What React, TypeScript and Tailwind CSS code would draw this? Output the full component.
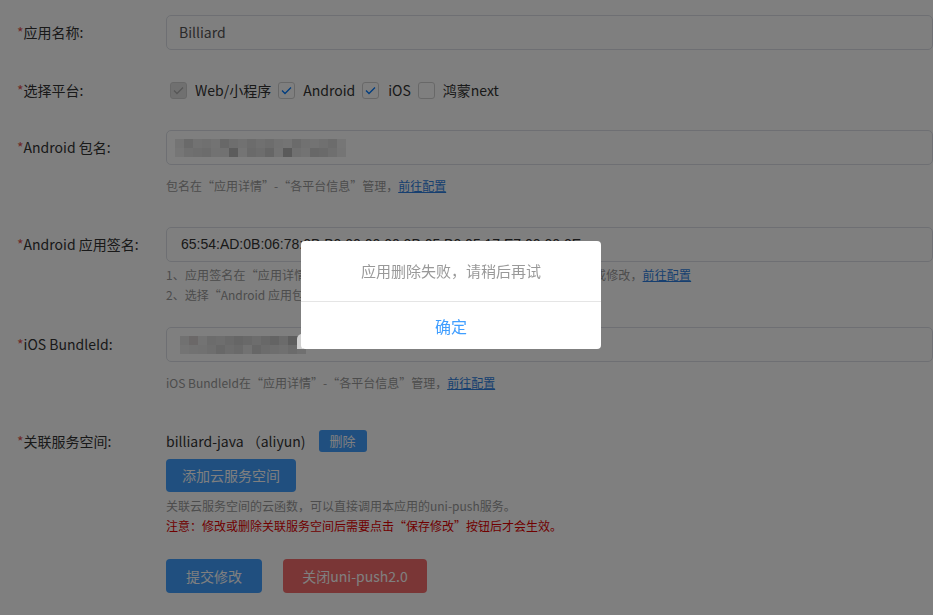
import React from "react";

const FONT = { fontFamily: "'Noto Sans CJK SC', 'Noto Sans', sans-serif" };

// blurred (mosaic) values, two rows of cells
const PKG_BLUR = [
  ["#e8e8e8", "#d4d4d4", "#e4e4e4", "#e0e0e0", "#e6e6e6", "#d0d0d0", "#dcdcdc", "#e2e2e2", "#d8d8d8", "#e0e0e0", "#dadada", "#e4e4e4", "#e8e8e8", "#d6d6d6", "#e2e2e2", "#e6e6e6", "#e0e0e0", "#d8d8d8", "#ececec"],
  ["#ececec", "#e0e0e0", "#dcdcdc", "#d8d8d8", "#e4e4e4", "#e2e2e2", "#b8b8b8", "#e8e8e8", "#d4d4d4", "#dadada", "#cccccc", "#e6e6e6", "#b4b4b4", "#e0e0e0", "#e6e6e6", "#d0d0d0", "#d4d4d4", "#dedede", "#eaeaea"],
];
const IOS_BLUR = [
  ["#e2e2e2", "#d6d0d0", "#e6e6e6", "#d8d8d8", "#dcdcdc", "#d4d4d4", "#cccccc", "#d2d2d2", "#dadada", "#d0d0d0", "#c8c8c8", "#d6d6d6", "#bcbcbc", "#c8c8c8"],
  ["#e8e8e8", "#e4e4e4", "#e2e2e2", "#dddddd", "#d0d0d0", "#dadada", "#d4d4d4", "#e4e4e4", "#cfcfcf", "#d8d8d8", "#dcdcdc", "#e0e0e0", "#d6d6d6", "#e0e0e0"],
];

function Mosaic({ rows, cell }: { rows: string[][]; cell: number }) {
  return (
    <div className="flex flex-col">
      {rows.map((r, i) => (
        <div key={i} className="flex">
          {r.map((c, j) => (
            <span key={j} style={{ background: c, width: cell, height: 9 }} />
          ))}
        </div>
      ))}
    </div>
  );
}

function Label({ children }: { children: React.ReactNode }) {
  return (
    <div className="w-[149px] shrink-0 text-[14px] text-[#333]">
      <span className="text-[#dd524d]">*</span>
      {children}
    </div>
  );
}

function Check({ on, disabled }: { on?: boolean; disabled?: boolean }) {
  return (
    <span
      className={`flex h-[17px] w-[17px] shrink-0 items-center justify-center rounded-[3px] border ${
        disabled ? "border-[#d1d1d1] bg-[#e1e1e1]" : "border-[#d1d1d1] bg-white"
      }`}
    >
      {on && (
        <svg width="11" height="9" viewBox="0 0 11 9" fill="none">
          <path
            d="M1 4.5 L4 7.5 L10 1.5"
            stroke={disabled ? "#adadad" : "#007aff"}
            strokeWidth="1.3"
          />
        </svg>
      )}
    </span>
  );
}

function Link() {
  return <span className="text-[#2e7fe0] underline">前往配置</span>;
}

export default function App() {
  return (
    <div className="relative h-screen w-full overflow-hidden bg-white" style={FONT}>
      <div className="pl-[17px] pt-[15px]">
        {/* 应用名称 */}
        <div className="flex items-center">
          <Label>应用名称:</Label>
          <div className="flex h-[35px] w-[820px] items-center rounded-[5px] border border-[#dcdfe6] px-[12px] text-[14px] text-[#555]">
            Billiard
          </div>
        </div>

        {/* 平台 */}
        <div className="mt-[23px] flex h-[35px] items-center">
          <Label>选择平台:</Label>
          <div className="flex items-center pl-[4px] text-[14px] text-[#333]">
            <Check on disabled />
            <span className="ml-[8px] mr-[7px]">Web/小程序</span>
            <Check on />
            <span className="ml-[8px] mr-[7px]">Android</span>
            <Check on />
            <span className="ml-[9px] mr-[7px]">iOS</span>
            <Check />
            <span className="ml-[8px]">鸿蒙next</span>
          </div>
        </div>

        {/* Android 包名 */}
        <div className="mt-[22px] flex items-center">
          <Label>Android 包名:</Label>
          <div className="flex h-[35px] w-[820px] items-center rounded-[5px] border border-[#dcdfe6] pl-[8px]">
            <Mosaic rows={PKG_BLUR} cell={9} />
          </div>
        </div>
        <div className="mt-[11px] pl-[149px] text-[12px] leading-[20px] text-[#999]">
          包名在“应用详情”-“各平台信息”管理，<Link />
        </div>

        {/* Android 应用签名 */}
        <div className="mt-[31px] flex items-center">
          <Label>Android 应用签名:</Label>
          <div
            className="flex h-[35px] w-[820px] items-center rounded-[5px] border border-[#dcdfe6] px-[14px] text-[14px] text-[#333]"
            style={{ fontFamily: "'Liberation Sans', Arial, sans-serif" }}
          >
            65:54:AD:0B:06:78:0B:B0:00:00:00:0B:05:B0:05:17:E7:00:00:0E
          </div>
        </div>
        <div className="mt-[3px] pl-[149px] text-[12px] leading-[20px] text-[#999]">
          <div className="tracking-[0.14px]">
            1、应用签名在“应用详情”-“各平台信息”-“Android 应用签名信息”中查看或修改，<Link />
          </div>
          <div>2、选择“Android 应用包名”对应的签名信息，多个签名请用英文逗号分隔</div>
        </div>

        {/* iOS BundleId */}
        <div className="mt-[22px] flex items-center">
          <Label>iOS BundleId:</Label>
          <div className="flex h-[35px] w-[820px] items-center rounded-[5px] border border-[#dcdfe6] pl-[13px]">
            <Mosaic rows={IOS_BLUR} cell={9} />
          </div>
        </div>
        <div className="mt-[11px] pl-[149px] text-[12px] leading-[20px] text-[#999]">
          iOS BundleId在“应用详情”-“各平台信息”管理，<Link />
        </div>

        {/* 关联服务空间 */}
        <div className="mt-[37px] flex h-[22px] items-center">
          <Label>关联服务空间:</Label>
          <span className="text-[14px] text-[#333]">billiard-java （aliyun)</span>
          <button className="ml-[13px] h-[22px] w-[48px] rounded-[3px] bg-[#409eff] text-[13px] text-white">
            删除
          </button>
        </div>
        <div className="pl-[149px]">
          <button className="mt-[7px] h-[33px] w-[130px] rounded-[4px] bg-[#409eff] text-[14px] text-white">
            添加云服务空间
          </button>
          <div className="mt-[4px] text-[12px] leading-[20px] text-[#999]">
            关联云服务空间的云函数，可以直接调用本应用的uni-push服务。
          </div>
          <div className="text-[12px] leading-[20px] text-[#e10000]">
            注意：修改或删除关联服务空间后需要点击“保存修改”按钮后才会生效。
          </div>
          <div className="mt-[23px] flex gap-[21px]">
            <button className="h-[34px] w-[96px] rounded-[4px] bg-[#409eff] text-[14px] text-white">
              提交修改
            </button>
            <button className="h-[34px] w-[144px] rounded-[4px] bg-[#f56c6c] text-[14px] text-white">
              关闭uni-push2.0
            </button>
          </div>
        </div>
      </div>

      {/* mask */}
      <div className="fixed inset-0 bg-black/50" />

      {/* stray corner left of the modal */}
      <div className="absolute left-[297px] top-[334px] h-[15px] w-[6px] rounded-tl-[5px] bg-[#d0d0d0]" />

      {/* modal */}
      <div className="absolute left-[301px] top-[241px] w-[300px] overflow-hidden rounded-[4px] bg-white">
        <div className="flex h-[60px] items-center justify-center text-[15px] text-[#999]">
          应用删除失败，请稍后再试
        </div>
        <div className="flex h-[48px] items-center justify-center border-t border-[#e5e5e5] text-[16px] text-[#409eff]">
          确定
        </div>
      </div>
    </div>
  );
}
